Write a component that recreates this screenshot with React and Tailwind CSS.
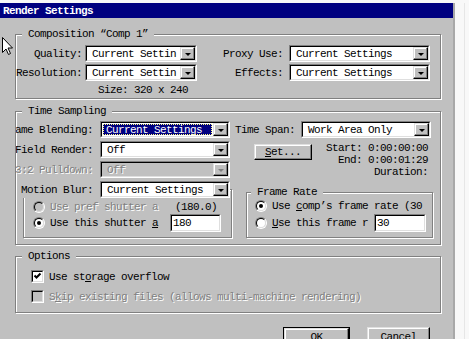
import React from "react";

const etched =
  "border border-[#808080] shadow-[inset_1px_1px_0_#fff,1px_1px_0_#fff]";
const raised =
  "bg-[#c0c0c0] border border-t-[#dfdfdf] border-l-[#dfdfdf] border-r-black border-b-black shadow-[inset_-1px_-1px_0_#808080,inset_1px_1px_0_#fff]";
const sunkenOuter =
  "border border-t-[#808080] border-l-[#808080] border-b-white border-r-white";
const sunkenInner =
  "border border-t-black border-l-black border-b-[#dfdfdf] border-r-[#dfdfdf]";
const dim = "text-[#808080] [text-shadow:1px_1px_0_#fff]";

const Legend = ({ children, className = "" }) => (
  <div
    className={`self-start -mt-[7px] h-[12px] px-[6px] bg-[#c0c0c0] whitespace-nowrap ${className}`}
  >
    {children}
  </div>
);

const Label = ({ children, className = "" }) => (
  <div
    className={`shrink-0 flex justify-end overflow-hidden whitespace-nowrap ${className}`}
  >
    {children}
  </div>
);

const DropButton = ({ disabled }) => (
  <div className={`w-[15px] h-full shrink-0 flex items-center justify-center ${raised}`}>
    <div
      className={`mt-[1px] w-0 h-0 border-x-[3px] border-x-transparent border-t-[3px] ${
        disabled ? "border-t-[#808080]" : "border-t-black"
      }`}
    />
  </div>
);

const Select = ({ value, className = "", active, disabled }) => (
  <div className={`h-[17px] shrink-0 flex ${sunkenOuter} ${className}`}>
    <div
      className={`flex-1 min-w-0 flex ${sunkenInner} ${
        disabled ? "bg-[#c0c0c0]" : "bg-white"
      }`}
    >
      {active ? (
        <div className="flex-1 min-w-0 flex p-[1px]">
          <div className="flex-1 flex items-center pl-[3px] bg-[#000080] text-white whitespace-nowrap overflow-hidden outline-1 outline-dotted outline-[#ffff80] -outline-offset-1">
            {value}
          </div>
        </div>
      ) : (
        <div
          className={`flex-1 min-w-0 flex items-center pl-[5px] whitespace-nowrap overflow-hidden ${
            disabled ? dim : ""
          }`}
        >
          {value}
        </div>
      )}
      <DropButton disabled={disabled} />
    </div>
  </div>
);

const Field = ({ value, className = "" }) => (
  <div className={`h-[18px] shrink-0 flex ${sunkenOuter} ${className}`}>
    <div className={`flex-1 flex items-center pl-[1px] bg-white ${sunkenInner}`}>
      {value}
    </div>
  </div>
);

const Radio = ({ checked, disabled }) => (
  <div className={`w-[12px] h-[12px] shrink-0 rounded-full ${sunkenOuter}`}>
    <div
      className={`w-full h-full rounded-full flex items-center justify-center ${sunkenInner} ${
        disabled ? "bg-[#c0c0c0]" : "bg-white"
      }`}
    >
      {checked && <div className="w-[4px] h-[4px] rounded-full bg-black" />}
    </div>
  </div>
);

const Check = ({ checked, disabled }) => (
  <div className={`w-[13px] h-[13px] shrink-0 flex ${sunkenOuter}`}>
    <div
      className={`flex-1 flex items-center justify-center ${sunkenInner} ${
        disabled ? "bg-[#c0c0c0]" : "bg-white"
      }`}
    >
      {checked && (
        <svg width="9" height="9" viewBox="0 0 9 9">
          <polyline
            points="1.5,3.5 3.5,5.5 7.5,1.5"
            fill="none"
            stroke="black"
            strokeWidth="2"
          />
        </svg>
      )}
    </div>
  </div>
);

const Button = ({ children, className = "", isDefault }) =>
  isDefault ? (
    <div className={`flex border border-black ${className}`}>
      <div className={`flex-1 flex justify-center pt-[2px] ${raised}`}>{children}</div>
    </div>
  ) : (
    <div className={`flex justify-center pt-[3px] ${raised} ${className}`}>{children}</div>
  );

export default function App() {
  return (
    <div className="relative w-[469px] h-[339px] overflow-hidden flex flex-col bg-[#f8f8f8] text-black font-['Liberation_Mono','DejaVu_Sans_Mono',monospace] text-[11px] leading-[12px] tracking-[-0.6px]">
      <div className="h-[3px] shrink-0" />
      <div className="flex flex-1 min-h-0">
        <div className="w-[453px] shrink-0 flex flex-col bg-[#c0c0c0]">
          {/* title bar */}
          <div className="h-[15px] shrink-0 flex items-center pl-[3px] bg-[#000080] text-white font-bold">
            Render Settings
          </div>

          {/* Composition */}
          <div className={`ml-[15px] w-[426px] h-[65px] mt-[16px] shrink-0 flex flex-col ${etched}`}>
            <Legend className="ml-[6px]">Composition “Comp 1”</Legend>
            <div className="mt-[5px] h-[17px] flex items-center">
              <Label className="w-[66px]">Quality:</Label>
              <Select className="ml-[3px] w-[112px]" value="Current Settin" />
              <Label className="w-[86px]">Proxy Use:</Label>
              <Select className="ml-[6px] w-[141px]" value="Current Settings" />
            </div>
            <div className="mt-[2px] h-[17px] flex items-center">
              <Label className="w-[66px]">Resolution:</Label>
              <Select className="ml-[3px] w-[112px]" value="Current Settin" />
              <Label className="w-[86px]">Effects:</Label>
              <Select className="ml-[6px] w-[141px]" value="Current Settings" />
            </div>
            <div className="mt-[3px] pl-[82px] whitespace-nowrap">Size: 320 x 240</div>
          </div>

          {/* Time Sampling */}
          <div className={`ml-[15px] w-[426px] h-[134px] mt-[12px] shrink-0 flex flex-col ${etched}`}>
            <Legend className="ml-[6px]">Time Sampling</Legend>
            <div className="mt-[4px] flex">
              <div className="flex flex-col gap-[3px]">
                <div className="h-[17px] flex items-center">
                  <Label className="w-[77px]">Frame Blending:</Label>
                  <Select className="ml-[7px] w-[130px]" value="Current Settings" active />
                </div>
                <div className="h-[17px] flex items-center">
                  <Label className="w-[77px]">Field Render:</Label>
                  <Select className="ml-[7px] w-[130px]" value="Off" />
                </div>
                <div className="h-[17px] flex items-center">
                  <Label className={`w-[77px] ${dim}`}>3:2 Pulldown:</Label>
                  <Select className="ml-[7px] w-[130px]" value="Off" disabled />
                </div>
              </div>
              <div className="ml-[5px] w-[196px] flex flex-col">
                <div className="h-[17px] flex items-center">
                  <span className="whitespace-nowrap">Time Span:</span>
                  <Select className="ml-[6px] w-[130px]" value="Work Area Only" />
                </div>
                <div className="flex">
                  <Button className="mt-[6px] ml-[19px] w-[58px] h-[16px] !pt-[1px]">
                    <span>
                      <u>S</u>et...
                    </span>
                  </Button>
                  <div className="mt-[4px] ml-auto mr-[3px] text-right whitespace-nowrap">
                    <div>Start: 0:00:00:00</div>
                    <div>End: 0:00:01:29</div>
                    <div>Duration:</div>
                  </div>
                </div>
              </div>
            </div>

            <div className="mt-[3px] flex items-start">
              {/* Motion blur */}
              <div className="ml-[7px] mt-[8px] w-[209px] h-[49px] shrink-0 flex flex-col border border-[#808080] shadow-[inset_1px_1px_0_#fff,1px_1px_0_#fff]">
                <div className="-mt-[9px] -ml-[3px] self-start h-[17px] flex items-center bg-[#c0c0c0]">
                  <Label className="w-[72px] !overflow-visible">Motion Blur:</Label>
                  <Select className="ml-[7px] w-[130px]" value="Current Settings" />
                </div>
                <div className="mt-[1px] h-[16px] flex items-center pl-[9px] whitespace-nowrap">
                  <Radio disabled />
                  <span className={`ml-[5px] ${dim}`}>Use pref shutter a</span>
                  <span className="ml-[17px]">(180.0)</span>
                </div>
                <div className="h-[16px] flex items-center pl-[9px] whitespace-nowrap">
                  <Radio checked />
                  <span className="ml-[5px]">
                    Use this shutter <u>a</u>
                  </span>
                  <Field className="ml-[12px] w-[51px]" value="180" />
                </div>
              </div>

              {/* Frame rate */}
              <div className={`ml-[14px] mt-[11px] w-[187px] h-[46px] shrink-0 flex flex-col ${etched}`}>
                <Legend className="ml-[4px]">Frame Rate</Legend>
                <div className="h-[16px] flex items-center pl-[8px] whitespace-nowrap overflow-hidden">
                  <Radio checked />
                  <span className="ml-[5px]">
                    Use <u>c</u>omp’s frame rate (30
                  </span>
                </div>
                <div className="mt-[1px] h-[16px] flex items-center pl-[8px] whitespace-nowrap">
                  <Radio />
                  <span className="ml-[5px]">
                    <u>U</u>se this frame r
                  </span>
                  <Field className="ml-[6px] w-[52px]" value="30" />
                </div>
              </div>
            </div>
          </div>

          {/* Options */}
          <div className={`ml-[15px] w-[426px] h-[57px] mt-[11px] shrink-0 flex flex-col ${etched}`}>
            <Legend className="ml-[6px]">Options</Legend>
            <div className="mt-[8px] h-[13px] flex items-center pl-[15px] whitespace-nowrap">
              <Check checked />
              <span className="ml-[5px]">
                Use st<u>o</u>rage overflow
              </span>
            </div>
            <div className="mt-[7px] h-[13px] flex items-center pl-[15px] whitespace-nowrap">
              <Check disabled />
              <span className={`ml-[5px] ${dim}`}>
                S<u>k</u>ip existing files (allows multi-machine rendering)
              </span>
            </div>
          </div>

          {/* buttons */}
          <div className="mt-[14px] flex pl-[283px]">
            <Button isDefault className="w-[67px] h-[23px]">
              OK
            </Button>
            <Button className="ml-[17px] w-[63px] h-[23px]">Cancel</Button>
          </div>
        </div>
        <div className="w-[2px] shrink-0 bg-[#a8a8a8]" />
        <div className="w-[9px] shrink-0" />
        <div className="w-[1px] shrink-0 bg-[#e6e6e6]" />
        <div className="flex-1" />
      </div>

      {/* mouse pointer */}
      <svg
        className="absolute left-[2px] top-[37px]"
        width="12"
        height="19"
        viewBox="0 0 12 19"
      >
        <path
          d="M0.5 0.5 L0.5 15.5 L4 12 L6.5 17.5 L8.5 16.5 L6 11 L10.5 11 Z"
          fill="white"
          stroke="black"
        />
      </svg>
    </div>
  );
}
